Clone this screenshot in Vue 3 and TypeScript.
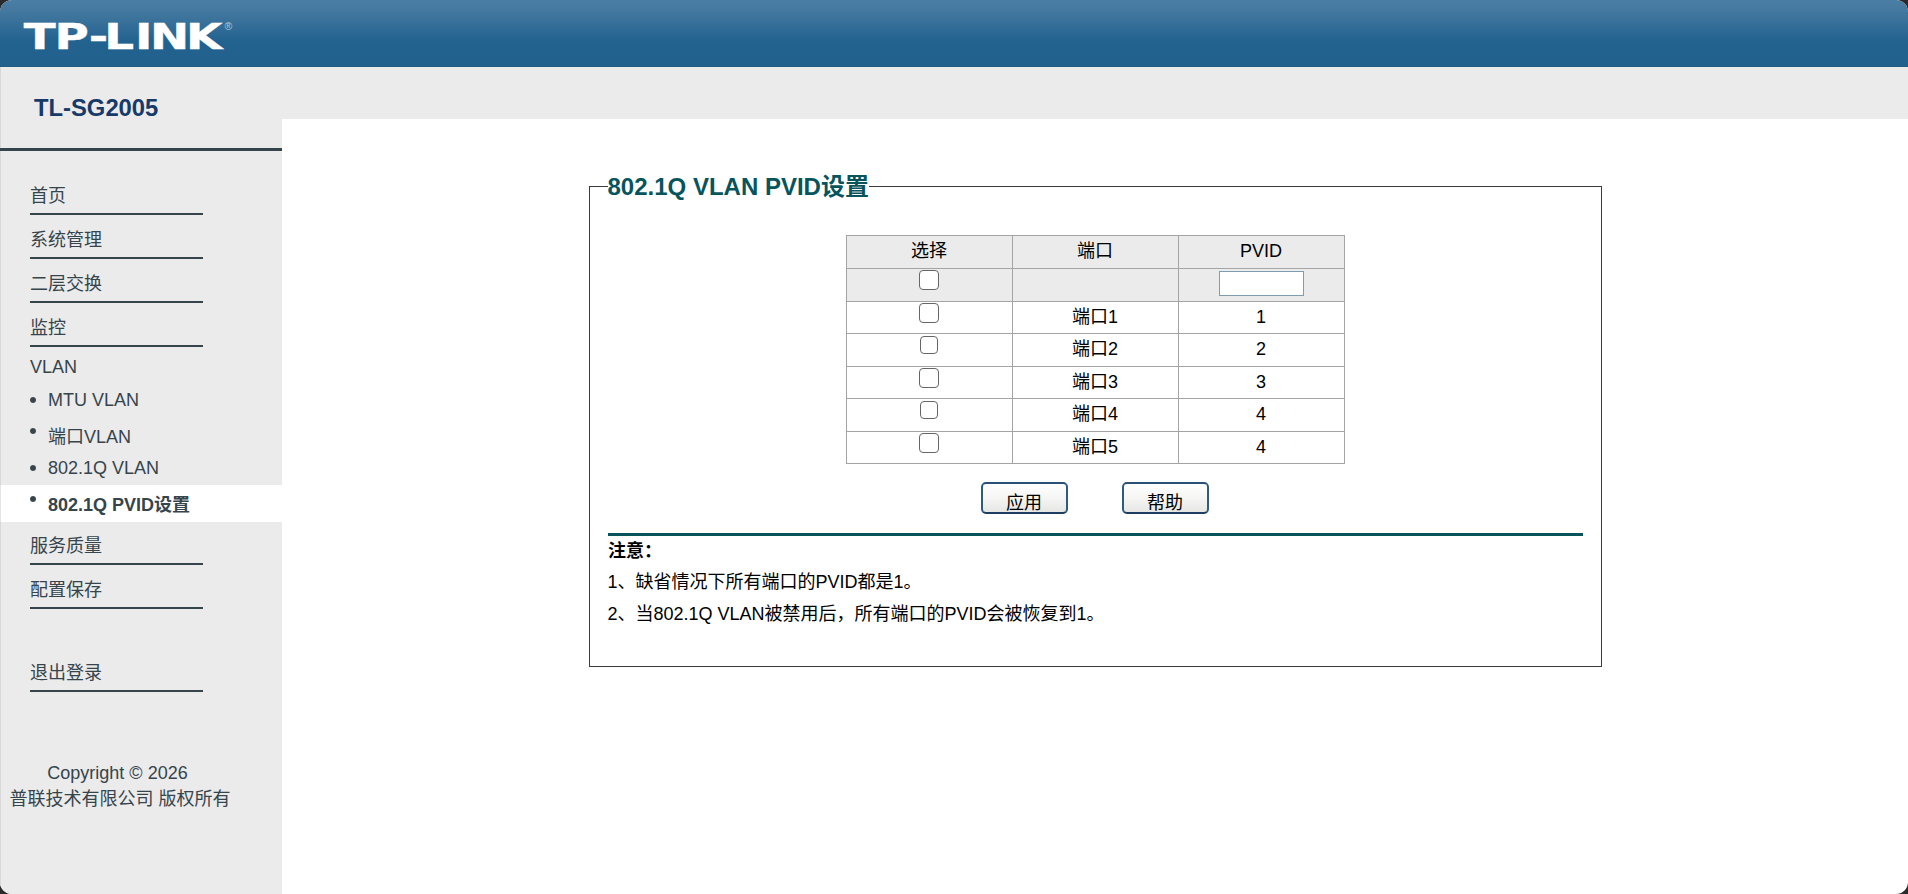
<script setup lang="ts">
import { ref } from 'vue'

interface PortRow {
  name: string
  pvid: number
}

const topMenu: string[] = ['首页', '系统管理', '二层交换', '监控']
const vlanMenu = [
  { label: 'MTU VLAN', cls: 'mtu' },
  { label: '端口VLAN', cls: 'port' },
  { label: '802.1Q VLAN', cls: 'dot1q' },
  { label: '802.1Q PVID设置', cls: 'active' },
]
const bottomMenu: string[] = ['服务质量', '配置保存']

const ports: PortRow[] = [
  { name: '端口1', pvid: 1 },
  { name: '端口2', pvid: 2 },
  { name: '端口3', pvid: 3 },
  { name: '端口4', pvid: 4 },
  { name: '端口5', pvid: 4 },
]
const selected = ref<boolean[]>(ports.map(() => false))
const selectAll = ref(false)
const pvid = ref('')

function toggleAll(): void {
  selected.value = ports.map(() => selectAll.value)
}
</script>

<template>
  <div class="window">
    <header class="banner">
      <svg class="logo" width="220" height="40" viewBox="0 0 220 40" role="img" aria-label="TP-LINK">
        <text class="logo-word" transform="scale(1.3 1)" x="0.5 24.2 50.6 62.5 86.1 97.7 125.4" y="35">TP-LINK</text>
        <text class="logo-mark" x="201.5" y="16">®</text>
      </svg>
    </header>
    <div class="body">
      <aside class="sidebar">
        <div class="model">TL-SG2005</div>
        <nav class="menu">
          <a v-for="item in topMenu" :key="item" class="entry">{{ item }}</a>
          <div class="group">VLAN</div>
          <a v-for="item in vlanMenu" :key="item.label" class="sub" :class="item.cls">
            <i class="bullet"></i><span>{{ item.label }}</span>
          </a>
          <a v-for="item in bottomMenu" :key="item" class="entry">{{ item }}</a>
          <a class="entry logout">退出登录</a>
        </nav>
        <div class="copyright">
          <div class="latin">Copyright © 2026</div>
          <div>普联技术有限公司 版权所有</div>
        </div>
      </aside>
      <main class="main">
        <div class="strip"></div>
        <fieldset class="panel">
          <legend>802.1Q VLAN PVID设置</legend>
          <table class="grid">
            <tbody>
              <tr class="head tall">
                <td>选择</td>
                <td>端口</td>
                <td>PVID</td>
              </tr>
              <tr class="head tall">
                <td class="pick"><input v-model="selectAll" type="checkbox" @change="toggleAll" /></td>
                <td></td>
                <td class="edit"><input v-model="pvid" type="text" /></td>
              </tr>
              <tr v-for="(port, i) in ports" :key="port.name" :class="i % 2 ? 'tall' : 'short'">
                <td class="pick"><input v-model="selected[i]" type="checkbox" :class="{ small: i % 2 }" /></td>
                <td>{{ port.name }}</td>
                <td>{{ port.pvid }}</td>
              </tr>
            </tbody>
          </table>
          <div class="actions">
            <button type="button">应用</button>
            <button type="button">帮助</button>
          </div>
          <div class="notes">
            <strong>注意：</strong>
            <p>1、缺省情况下所有端口的PVID都是1。</p>
            <p>2、当802.1Q VLAN被禁用后，所有端口的PVID会被恢复到1。</p>
          </div>
        </fieldset>
      </main>
    </div>
  </div>
</template>

<style>
html,
body {
  margin: 0;
  background: #2b2a2b;
  overflow: hidden;
}
</style>

<style scoped>
.window {
  box-sizing: border-box;
  width: 100vw;
  height: 100vh;
  display: flex;
  flex-direction: column;
  overflow: hidden;
  border-radius: 12px;
  background: #fff;
  color: #000;
  font-family: 'Liberation Sans', Arial, 'Noto Sans CJK SC', sans-serif;
  font-size: 18px;
  line-height: 24px;
}
.banner {
  flex: none;
  height: 67px;
  box-sizing: border-box;
  padding: 14px 0 0 23px;
  background: linear-gradient(#4b7ea3 0, #4479a0 10px, #22628f 42px, #22618e 66px, #2b5577 67px);
}
.logo {
  display: block;
  overflow: visible;
}
.logo-word {
  fill: #fff;
  stroke: #fff;
  stroke-width: 0.4px;
  font: bold 36px 'DejaVu Sans', Verdana, sans-serif;
}
.logo-mark {
  fill: #b5cad9;
  font: 10.5px 'Liberation Sans', Arial, sans-serif;
}
.body {
  flex: 1;
  display: flex;
  min-height: 0;
}
.sidebar {
  flex: none;
  box-sizing: border-box;
  width: 282px;
  background: #ebebeb;
  color: #36444b;
  box-shadow: inset 1px 0 #d8d8d8;
}
.model {
  box-sizing: border-box;
  height: 84px;
  padding-left: 34px;
  border-bottom: 3px solid #36444b;
  color: #173a69;
  font-size: 23.8px;
  font-weight: bold;
  line-height: 82px;
}
.menu {
  display: flex;
  flex-direction: column;
  padding-top: 20px;
}
.entry {
  box-sizing: border-box;
  width: 173px;
  height: 44px;
  margin-left: 30px;
  padding-top: 13px;
  border-bottom: 2px solid #36444b;
}
.logout {
  margin-top: 39px;
}
.group {
  height: 38px;
  padding-left: 30px;
  line-height: 41px;
}
.sub {
  box-sizing: border-box;
  display: flex;
  padding-left: 30px;
}
.bullet {
  flex: none;
  width: 6px;
  height: 6px;
  margin-right: 12px;
  border-radius: 50%;
  background: radial-gradient(circle, #36444b 55%, #5f6b71 75%);
}
.mtu {
  height: 30px;
  padding-top: 3px;
}
.mtu .bullet {
  margin-top: 9px;
}
.dot1q .bullet {
  margin-top: 9px;
}
.port {
  height: 38px;
  padding-top: 10px;
}
.port .bullet,
.active .bullet {
  margin-top: 3px;
}
.dot1q {
  height: 32px;
  padding-top: 3px;
}
.active {
  height: 37px;
  padding-top: 8px;
  background: #fff;
  font-weight: bold;
  box-shadow: inset 1px 0 #e4e4e4;
}
.active + .entry {
  height: 43px;
  padding-top: 12px;
}
.copyright {
  width: 220px;
  margin: 68px 0 0 9.5px;
  text-align: center;
  line-height: 26px;
  white-space: nowrap;
}
.latin {
  padding-right: 4px;
}
.main {
  flex: 1;
  display: flex;
  flex-direction: column;
}
.strip {
  height: 52px;
  background: #ebebeb;
}
.panel {
  box-sizing: border-box;
  width: 1013px;
  height: 495px;
  margin: 53px 0 0 307px;
  padding: 0 18px;
  border: 1px solid #3b3b3b;
}
legend {
  height: 29px;
  padding: 0;
  color: #07545c;
  font-size: 24px;
  font-weight: bold;
  line-height: 29px;
  text-indent: -0.5px;
}
.grid {
  width: 499px;
  margin: 34px auto 0;
  border-collapse: collapse;
  table-layout: fixed;
}
.grid td {
  box-sizing: border-box;
  padding: 0 1px 0 0;
  border: 1px solid #a4a4a4;
  text-align: center;
  vertical-align: top;
  line-height: 31px;
}
.tall td {
  height: 33px;
}
.short td {
  height: 32px;
}
.head td {
  background: #ebebeb;
}
.grid input {
  appearance: none;
  display: block;
  box-sizing: border-box;
  padding: 0;
  background: #fff;
}
.grid .pick {
  padding-right: 2px;
}
.grid .edit {
  padding-right: 0;
}
.grid .pick input {
  width: 20px;
  height: 20px;
  margin: 1px auto 0;
  border: 1px solid #666;
  border-radius: 4px;
}
.grid .pick input.small {
  width: 18px;
  height: 18px;
  margin-top: 2px;
}
.pick input:checked {
  background: #0075ff;
}
.edit input {
  width: 85px;
  height: 25px;
  margin: 2px auto 0;
  border: 1px solid #7f9db0;
  text-align: center;
}
.actions {
  display: flex;
  justify-content: center;
  gap: 54px;
  margin: 18px 2px 19px 0;
}
.actions button {
  width: 87px;
  height: 32px;
  padding: 9px 0 0;
  border: 2px solid #2c5b83;
  border-top-color: #2b5077;
  border-bottom-color: #1c3e63;
  border-radius: 5px;
  background: linear-gradient(#fff, #f5f5f4 50%, #e6e6e3);
  color: #000;
  font: inherit;
  line-height: 20px;
}
.notes {
  border-top: 3px solid #07545c;
  line-height: 32px;
}
.notes strong {
  display: block;
  height: 30px;
  line-height: 30px;
}
.notes p {
  margin: 0;
  text-indent: -0.5px;
}
</style>
